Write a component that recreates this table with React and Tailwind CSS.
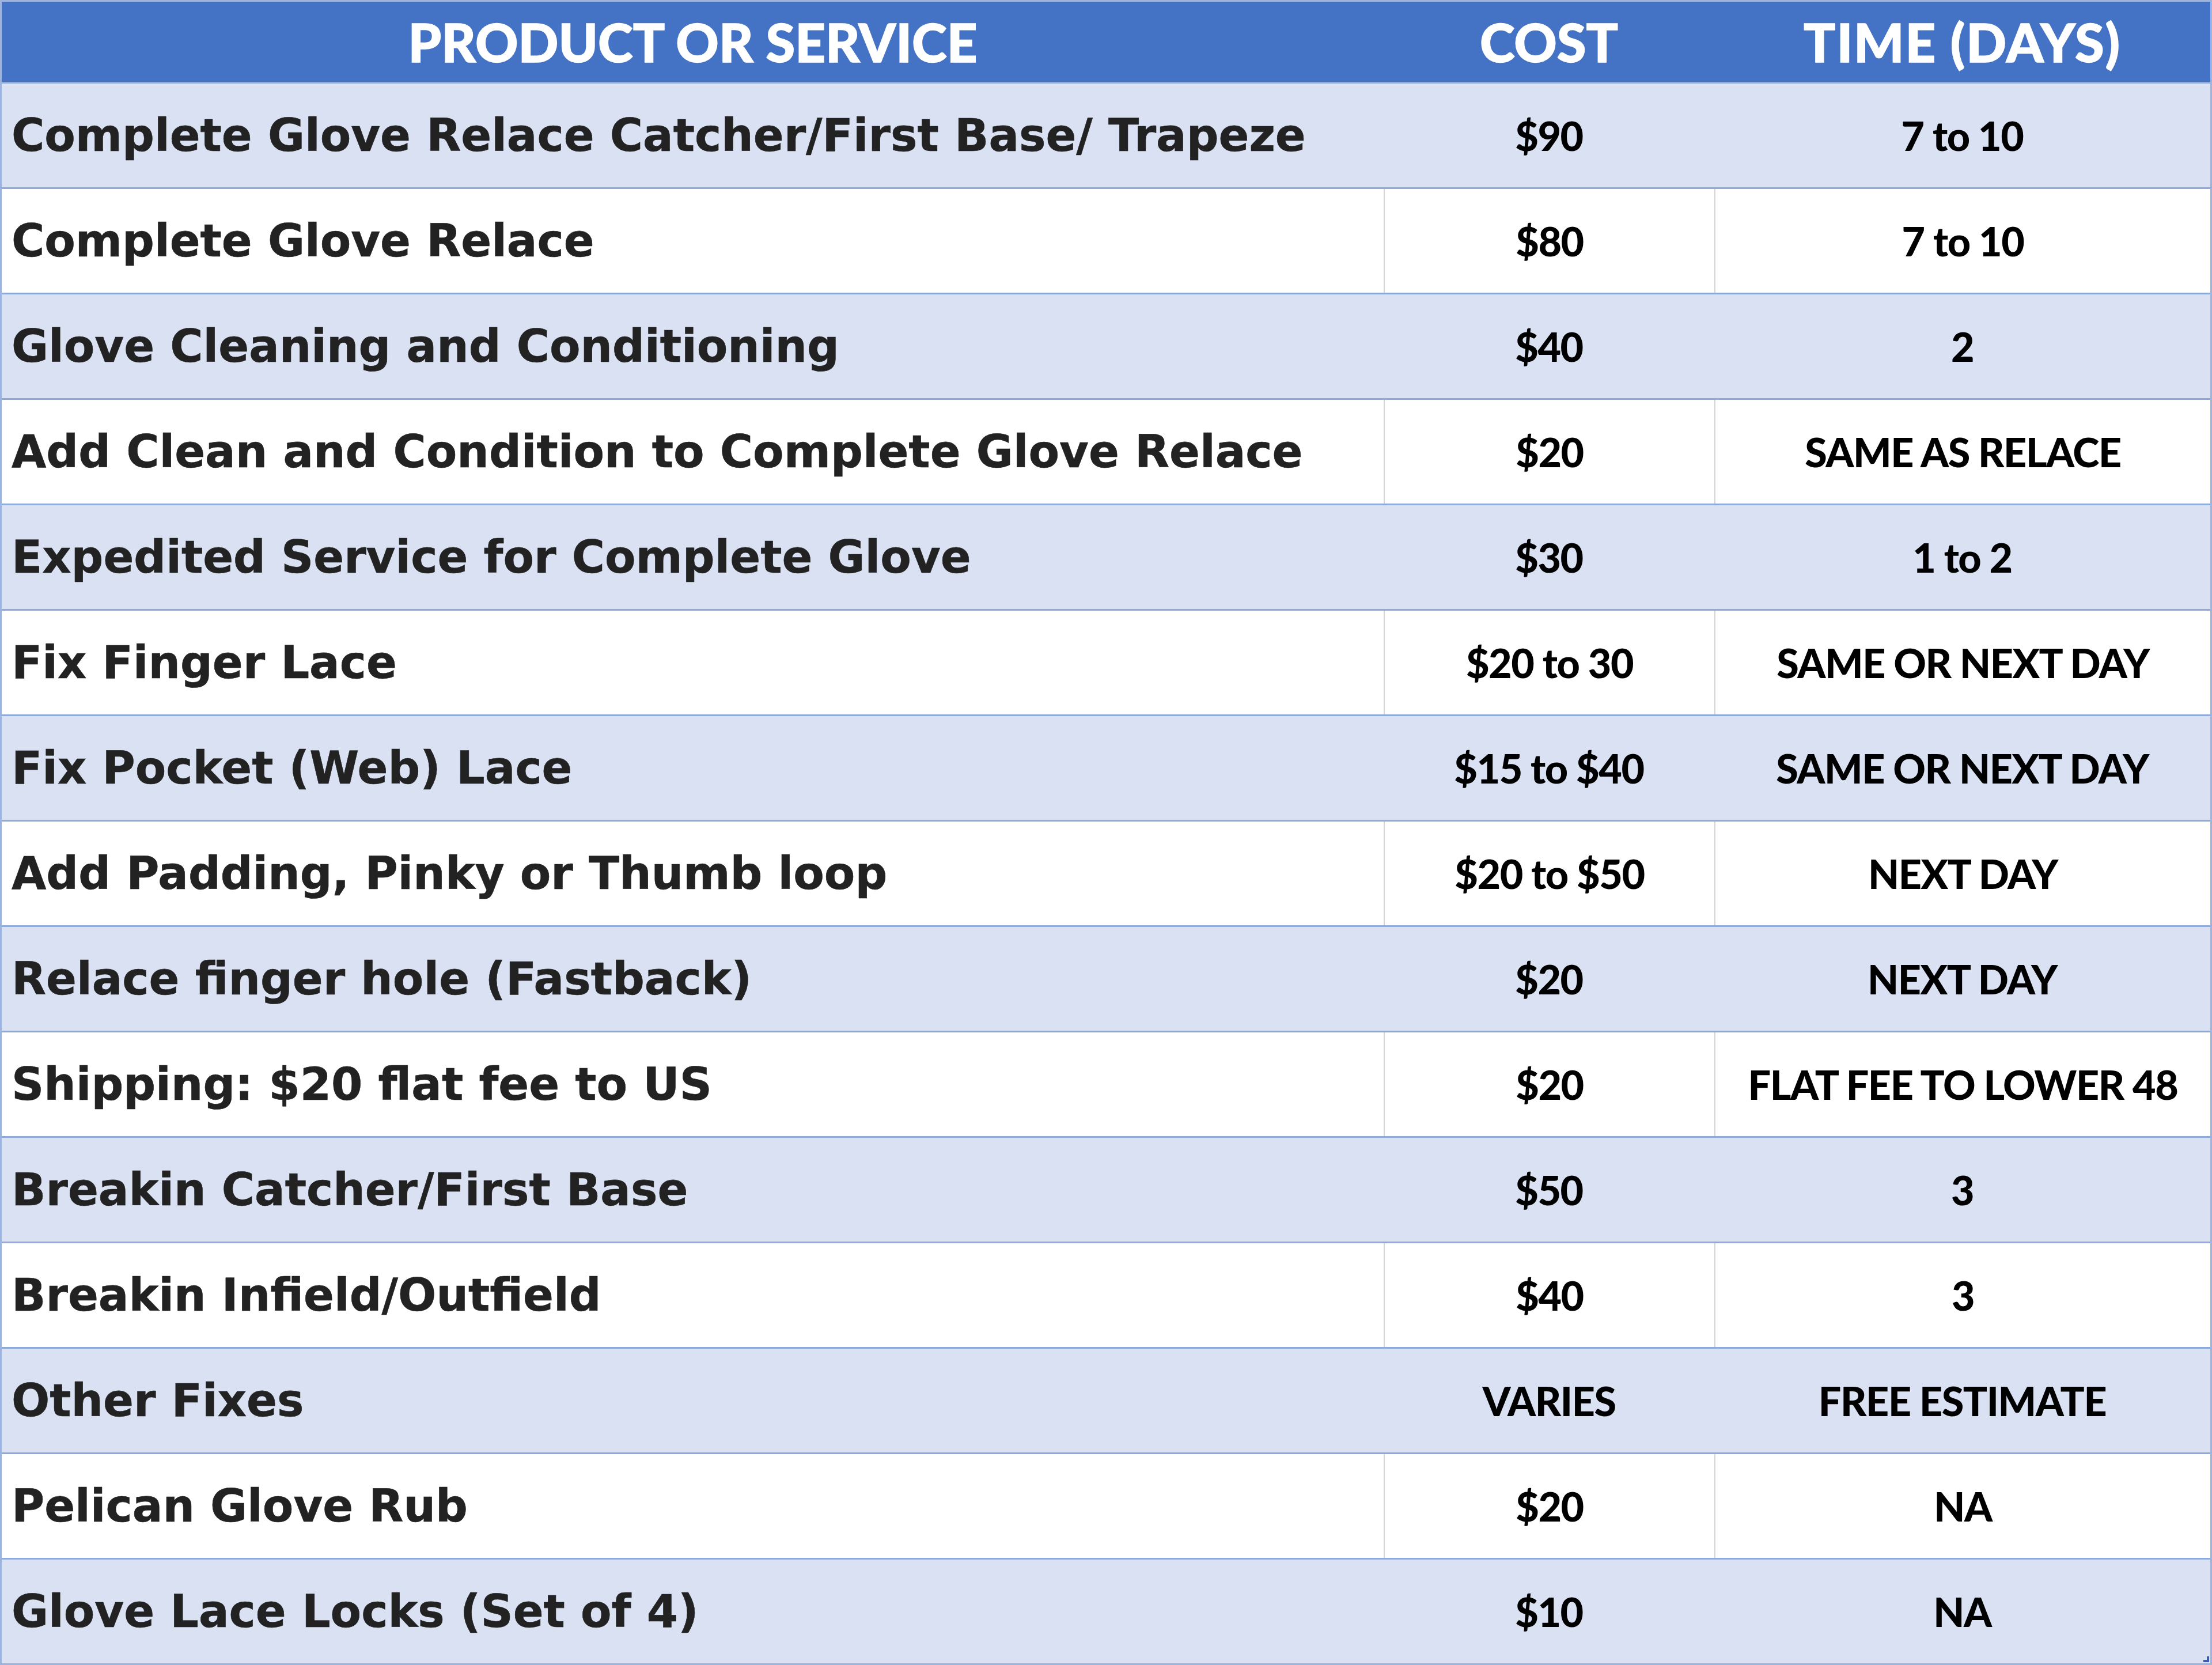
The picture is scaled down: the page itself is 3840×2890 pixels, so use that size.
import React from "react";

const rows = [
  ["Complete Glove Relace Catcher/First Base/ Trapeze", "$90", "7 to 10"],
  ["Complete Glove Relace", "$80", "7 to 10"],
  ["Glove Cleaning and Conditioning", "$40", "2"],
  ["Add Clean and Condition to Complete Glove Relace", "$20", "SAME AS RELACE"],
  ["Expedited Service for Complete Glove", "$30", "1 to 2"],
  ["Fix Finger Lace", "$20 to 30", "SAME OR NEXT DAY"],
  ["Fix Pocket (Web) Lace", "$15 to $40", "SAME OR NEXT DAY"],
  ["Add Padding, Pinky or Thumb loop", "$20 to $50", "NEXT DAY"],
  ["Relace finger hole (Fastback)", "$20", "NEXT DAY"],
  ["Shipping: $20 flat fee to US", "$20", "FLAT FEE TO LOWER 48"],
  ["Breakin Catcher/First Base", "$50", "3"],
  ["Breakin Infield/Outfield", "$40", "3"],
  ["Other Fixes", "VARIES", "FREE ESTIMATE"],
  ["Pelican Glove Rub", "$20", "NA"],
  ["Glove Lace Locks (Set of 4)", "$10", "NA"],
];

export default function App() {
  return (
    <div className="relative w-[3840px] h-[2890px] bg-white border-x-[3px] border-b-[3px] border-[#9db4df]">
      <div className="grid grid-cols-[2399px_574px_1fr] h-[142px] border-t-[3px] border-[#9db4df] bg-[#4472c4] text-white font-black text-[92px] [-webkit-text-stroke:1.5px_white] [font-family:Lato,'Liberation_Sans',sans-serif]">
        <div className="flex items-center justify-center">PRODUCT OR SERVICE</div>
        <div className="flex items-center justify-center">COST</div>
        <div className="flex items-center justify-center tracking-[0.02em]">TIME (DAYS)</div>
      </div>
      {rows.map((r, i) => {
        const band = i % 2 === 0;
        return (
          <div
            key={i}
            className={
              "grid grid-cols-[2399px_574px_1fr] h-[183px] border-t-[3px] border-[#8eaadb] " +
              (band ? "bg-[#d9e1f2]" : "bg-white")
            }
          >
            <div className="flex items-center pl-[17px] text-[78px] font-bold text-[#222222] whitespace-nowrap [-webkit-text-stroke:0.6px_#222222] [font-family:'DejaVu_Sans','Verdana',sans-serif]">
              {r[0]}
            </div>
            <div
              className={
                "flex items-center justify-center text-[70px] font-black text-black whitespace-nowrap tracking-[-0.02em] [font-family:Lato,'Liberation_Sans',sans-serif] " +
                (band ? "" : "border-l-2 border-[#d4d4d4]")
              }
            >
              {r[1]}
            </div>
            <div
              className={
                "flex items-center justify-center text-[70px] font-black text-black whitespace-nowrap tracking-[-0.02em] [font-family:Lato,'Liberation_Sans',sans-serif] " +
                (band ? "" : "border-l-2 border-[#d4d4d4]")
              }
            >
              {r[2]}
            </div>
          </div>
        );
      })}
      <div className="absolute right-[2px] bottom-[2px] w-[10px] h-[10px] bg-[#3a5bb5] [clip-path:polygon(100%_0,100%_100%,0_100%,0_60%,60%_60%,60%_0)]" />
    </div>
  );
}
